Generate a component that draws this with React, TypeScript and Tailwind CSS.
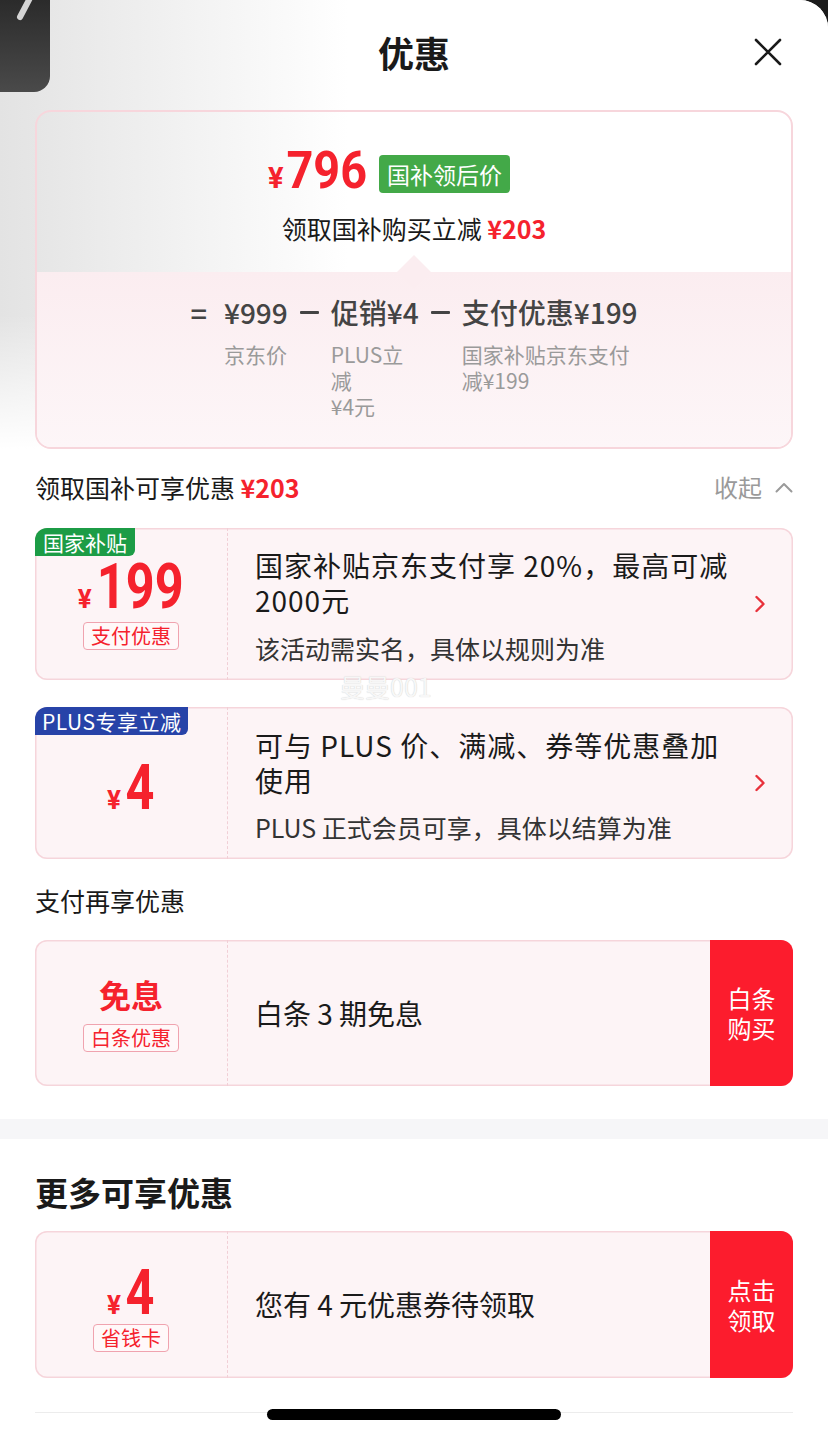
import React from 'react';

const Chevron = () => (
  <svg width="12" height="18" viewBox="0 0 12 18" fill="none">
    <path d="M2.5 2 L9.5 9 L2.5 16" stroke="#e8313b" strokeWidth="2.4" strokeLinecap="round" strokeLinejoin="round" />
  </svg>
);

const Tag = ({ children }: { children: React.ReactNode }) => (
  <span className="inline-block rounded-[4px] border border-[#f0a3af] bg-[#fff8f9] px-[7px] text-[20px] leading-[26px] text-[#f5222d]">
    {children}
  </span>
);

type CardProps = {
  className: string;
  badge?: React.ReactNode;
  left: React.ReactNode;
  leftClass: string;
  right: React.ReactNode;
  rightClass: string;
  action: React.ReactNode;
};

function Card({ className, badge, left, leftClass, right, rightClass, action }: CardProps) {
  return (
    <div className={`relative mx-[35px] flex overflow-hidden rounded-[12px] bg-[#fdf4f6] shadow-[inset_0_0_0_1.5px_#f6d5db] ${className}`}>
      {badge}
      <div className={`flex w-[193px] shrink-0 flex-col items-center border-r border-dashed border-[#f1cfd6] ${leftClass}`}>{left}</div>
      <div className={`flex min-w-0 flex-1 flex-col justify-center pl-[27px] ${rightClass}`}>{right}</div>
      {action}
    </div>
  );
}

const RedButton = ({ a, b }: { a: string; b: string }) => (
  <div className="flex w-[83px] shrink-0 flex-col items-center justify-center bg-[#fc1c2d] text-[24px] leading-[30px] text-white">
    <span>{a}</span>
    <span>{b}</span>
  </div>
);

const ChevronAction = () => (
  <div className="flex shrink-0 items-center pr-[27px]">
    <Chevron />
  </div>
);

const Minus = () => (
  <span className="mx-[12px] flex h-[36px] items-center">
    <span className="inline-block h-[3px] w-[19px] rounded-[1px] bg-[#444]" />
  </span>
);

export default function App() {
  return (
    <div className="relative min-h-[1437px] w-[828px] overflow-hidden bg-[#1c1c1c] font-['Noto_Sans_CJK_SC','Noto_Sans',sans-serif] text-[#1a1a1a]">
      <div className="relative min-h-[1437px] overflow-hidden rounded-t-[28px] bg-white">
        {/* header + summary card */}
        <div className="bg-[linear-gradient(180deg,rgba(255,255,255,0)_70%,#ffffff_100%),linear-gradient(90deg,#e3e3e3_0%,#ffffff_42%)]">
          <div className="grid h-[110px] grid-cols-[1fr_auto_1fr] items-center pb-[6px]">
            <div />
            <div className="text-[36px] font-bold leading-none text-[#1a1a1a]">优惠</div>
            <div className="flex justify-end pr-[46px]">
              <svg width="28" height="28" viewBox="0 0 28 28" fill="none">
                <path d="M2 2 L26 26 M26 2 L2 26" stroke="#1a1a1a" strokeWidth="2.6" strokeLinecap="round" />
              </svg>
            </div>
          </div>

          <div className="mx-[35px] overflow-hidden rounded-[16px] border-2 border-[#f7d6dc]">
            <div className="flex flex-col items-center pb-[28px] pt-[42px]">
              <div className="mr-[50px] flex h-[40px] items-center gap-[10px]">
                <div className="flex items-baseline font-['Roboto',sans-serif] font-bold leading-[40px] text-[#f5222d]">
                  <span className="text-[29px]">¥</span>
                  <span className="mx-[-2px] inline-block scale-x-90 text-[52px]">796</span>
                </div>
                <div className="flex h-[38px] items-center rounded-[4px] bg-[#43a948] px-[8px] text-[23px] text-white">
                  国补领后价
                </div>
              </div>
              <div className="mt-[18px] text-[25px] leading-[32px] text-[#1a1a1a]">
                领取国补购买立减 <span className="font-bold text-[#f5222d]">¥203</span>
              </div>
            </div>

            <div className="relative bg-[linear-gradient(180deg,#fbedf0_0%,#fdf6f8_100%)] pb-[28px] pt-[22px]">
              <div className="absolute left-1/2 top-[-12px] h-[24px] w-[24px] -translate-x-1/2 rotate-45 bg-[#fbedf0]" />
              <div className="relative flex items-start justify-center font-medium text-[#444]">
                <span className="text-[29px] leading-[36px]">=</span>
                <div className="ml-[17px] flex flex-col">
                  <span className="text-[28px] leading-[36px]">¥999</span>
                  <span className="mt-[11px] text-[21px] font-normal leading-[26px] text-[#9a9a9a]">京东价</span>
                </div>
                <Minus />
                <div className="flex flex-col">
                  <span className="text-[28px] leading-[36px]">促销¥4</span>
                  <div className="mt-[11px] flex flex-col text-[21px] font-normal leading-[26px] text-[#9a9a9a]">
                    <span>PLUS立</span>
                    <span>减</span>
                    <span>¥4元</span>
                  </div>
                </div>
                <Minus />
                <div className="flex flex-col">
                  <span className="text-[28px] leading-[36px]">支付优惠¥199</span>
                  <div className="mt-[11px] flex flex-col text-[21px] font-normal leading-[26px] text-[#9a9a9a]">
                    <span>国家补贴京东支付</span>
                    <span>减¥199</span>
                  </div>
                </div>
              </div>
            </div>
          </div>
        </div>

        {/* section: 领取国补可享优惠 */}
        <div className="mx-[35px] mt-[23px] flex h-[30px] items-center justify-between">
          <div className="text-[25px] leading-[30px] text-[#1a1a1a]">
            领取国补可享优惠 <span className="font-bold text-[#f5222d]">¥203</span>
          </div>
          <div className="flex items-center gap-[13px] text-[24px] text-[#9a9a9a]">
            <span>收起</span>
            <svg width="18" height="11" viewBox="0 0 18 11" fill="none">
              <path d="M1.5 9.5 L9 2 L16.5 9.5" stroke="#9a9a9a" strokeWidth="2" strokeLinecap="round" strokeLinejoin="round" />
            </svg>
          </div>
        </div>

        <Card
          className="mt-[26px] h-[152px]"
          badge={
            <div className="absolute left-0 top-0 h-[28px] rounded-br-[6px] bg-[#1c9c46] px-[8px] text-[21px] leading-[28px] text-white">
              国家补贴
            </div>
          }
          leftClass="pt-[31px]"
          left={
            <>
              <div className="flex h-[56px] items-baseline font-['Roboto',sans-serif] font-bold leading-[56px] text-[#f5222d]">
                <span className="mr-[4px] text-[26px]">¥</span>
                <span className="mx-[-10px] inline-block scale-x-80 text-[63px]">199</span>
              </div>
              <div className="mt-[7px]">
                <Tag>支付优惠</Tag>
              </div>
            </>
          }
          rightClass="pt-[3px]"
          right={
            <>
              <div className="text-[28px] leading-[35px] tracking-[1px]">
                国家补贴京东支付享 20%，最高可减
                <br />
                2000元
              </div>
              <div className="mt-[15px] text-[25px] leading-[30px] text-[#333]">该活动需实名，具体以规则为准</div>
            </>
          }
          action={<ChevronAction />}
        />

        <Card
          className="mt-[27px] h-[152px]"
          badge={
            <div className="absolute left-0 top-0 h-[28px] rounded-br-[6px] bg-[#2743a8] px-[7px] text-[21px] leading-[28px] tracking-[0.5px] text-white">
              PLUS专享立减
            </div>
          }
          leftClass="pt-[53px]"
          left={
            <div className="flex h-[56px] items-baseline font-['Roboto',sans-serif] font-bold leading-[56px] text-[#f5222d]">
              <span className="mr-[4px] text-[26px]">¥</span>
              <span className="mx-[-3px] inline-block scale-x-80 text-[63px]">4</span>
            </div>
          }
          rightClass="pt-[4px]"
          right={
            <>
              <div className="text-[28px] leading-[35px] tracking-[1px]">
                可与 PLUS 价、满减、券等优惠叠加
                <br />
                使用
              </div>
              <div className="mt-[14px] text-[25px] leading-[30px] text-[#333]">PLUS 正式会员可享，具体以结算为准</div>
            </>
          }
          action={<ChevronAction />}
        />

        <div className="mx-[35px] mt-[26px] text-[25px] leading-[30px] text-[#1a1a1a]">支付再享优惠</div>

        <Card
          className="mt-[25px] h-[146px]"
          leftClass="pt-[36px]"
          left={
            <>
              <div className="text-[32px] font-bold leading-[36px] text-[#f5222d]">免息</div>
              <div className="mt-[12px]">
                <Tag>白条优惠</Tag>
              </div>
            </>
          }
          rightClass=""
          right={<div className="text-[28px] leading-[35px]">白条 3 期免息</div>}
          action={<RedButton a="白条" b="购买" />}
        />

        <div className="mt-[33px] h-[20px] bg-[#f6f6f8]" />

        <div className="mx-[35px] mt-[33px] text-[33px] font-bold leading-[40px] text-[#1a1a1a]">更多可享优惠</div>

        <Card
          className="mt-[19px] h-[147px]"
          leftClass="pt-[34px]"
          left={
            <>
              <div className="flex h-[56px] items-baseline font-['Roboto',sans-serif] font-bold leading-[56px] text-[#f5222d]">
                <span className="mr-[4px] text-[26px]">¥</span>
                <span className="mx-[-3px] inline-block scale-x-80 text-[63px]">4</span>
              </div>
              <div className="mt-[3px]">
                <Tag>省钱卡</Tag>
              </div>
            </>
          }
          rightClass=""
          right={<div className="text-[28px] leading-[35px]">您有 4 元优惠券待领取</div>}
          action={<RedButton a="点击" b="领取" />}
        />

        <div className="mx-[35px] mt-[34px] h-[24px] border-t border-[#ececec]" />

        {/* watermark */}
        <div className="pointer-events-none absolute left-[340px] top-[670px] text-[25px] leading-[32px] text-[#f7f7f7] [text-shadow:0_0_1px_#c8c8c8]">
          曼曼001
        </div>

        {/* home indicator */}
        <div className="absolute bottom-[17px] left-[267px] h-[11px] w-[294px] rounded-full bg-black" />
      </div>

      {/* dark shape at top-left */}
      <div className="absolute left-0 top-0 h-[92px] w-[50px] rounded-br-[16px] bg-[linear-gradient(180deg,#2b2b2b_0%,#4a4a4a_100%)]">
        <svg className="absolute left-0 top-0" width="50" height="30" viewBox="0 0 50 30" fill="none">
          <path d="M30 -2 L20 17" stroke="#d4d4d4" strokeWidth="6" strokeLinecap="round" />
        </svg>
      </div>
    </div>
  );
}
